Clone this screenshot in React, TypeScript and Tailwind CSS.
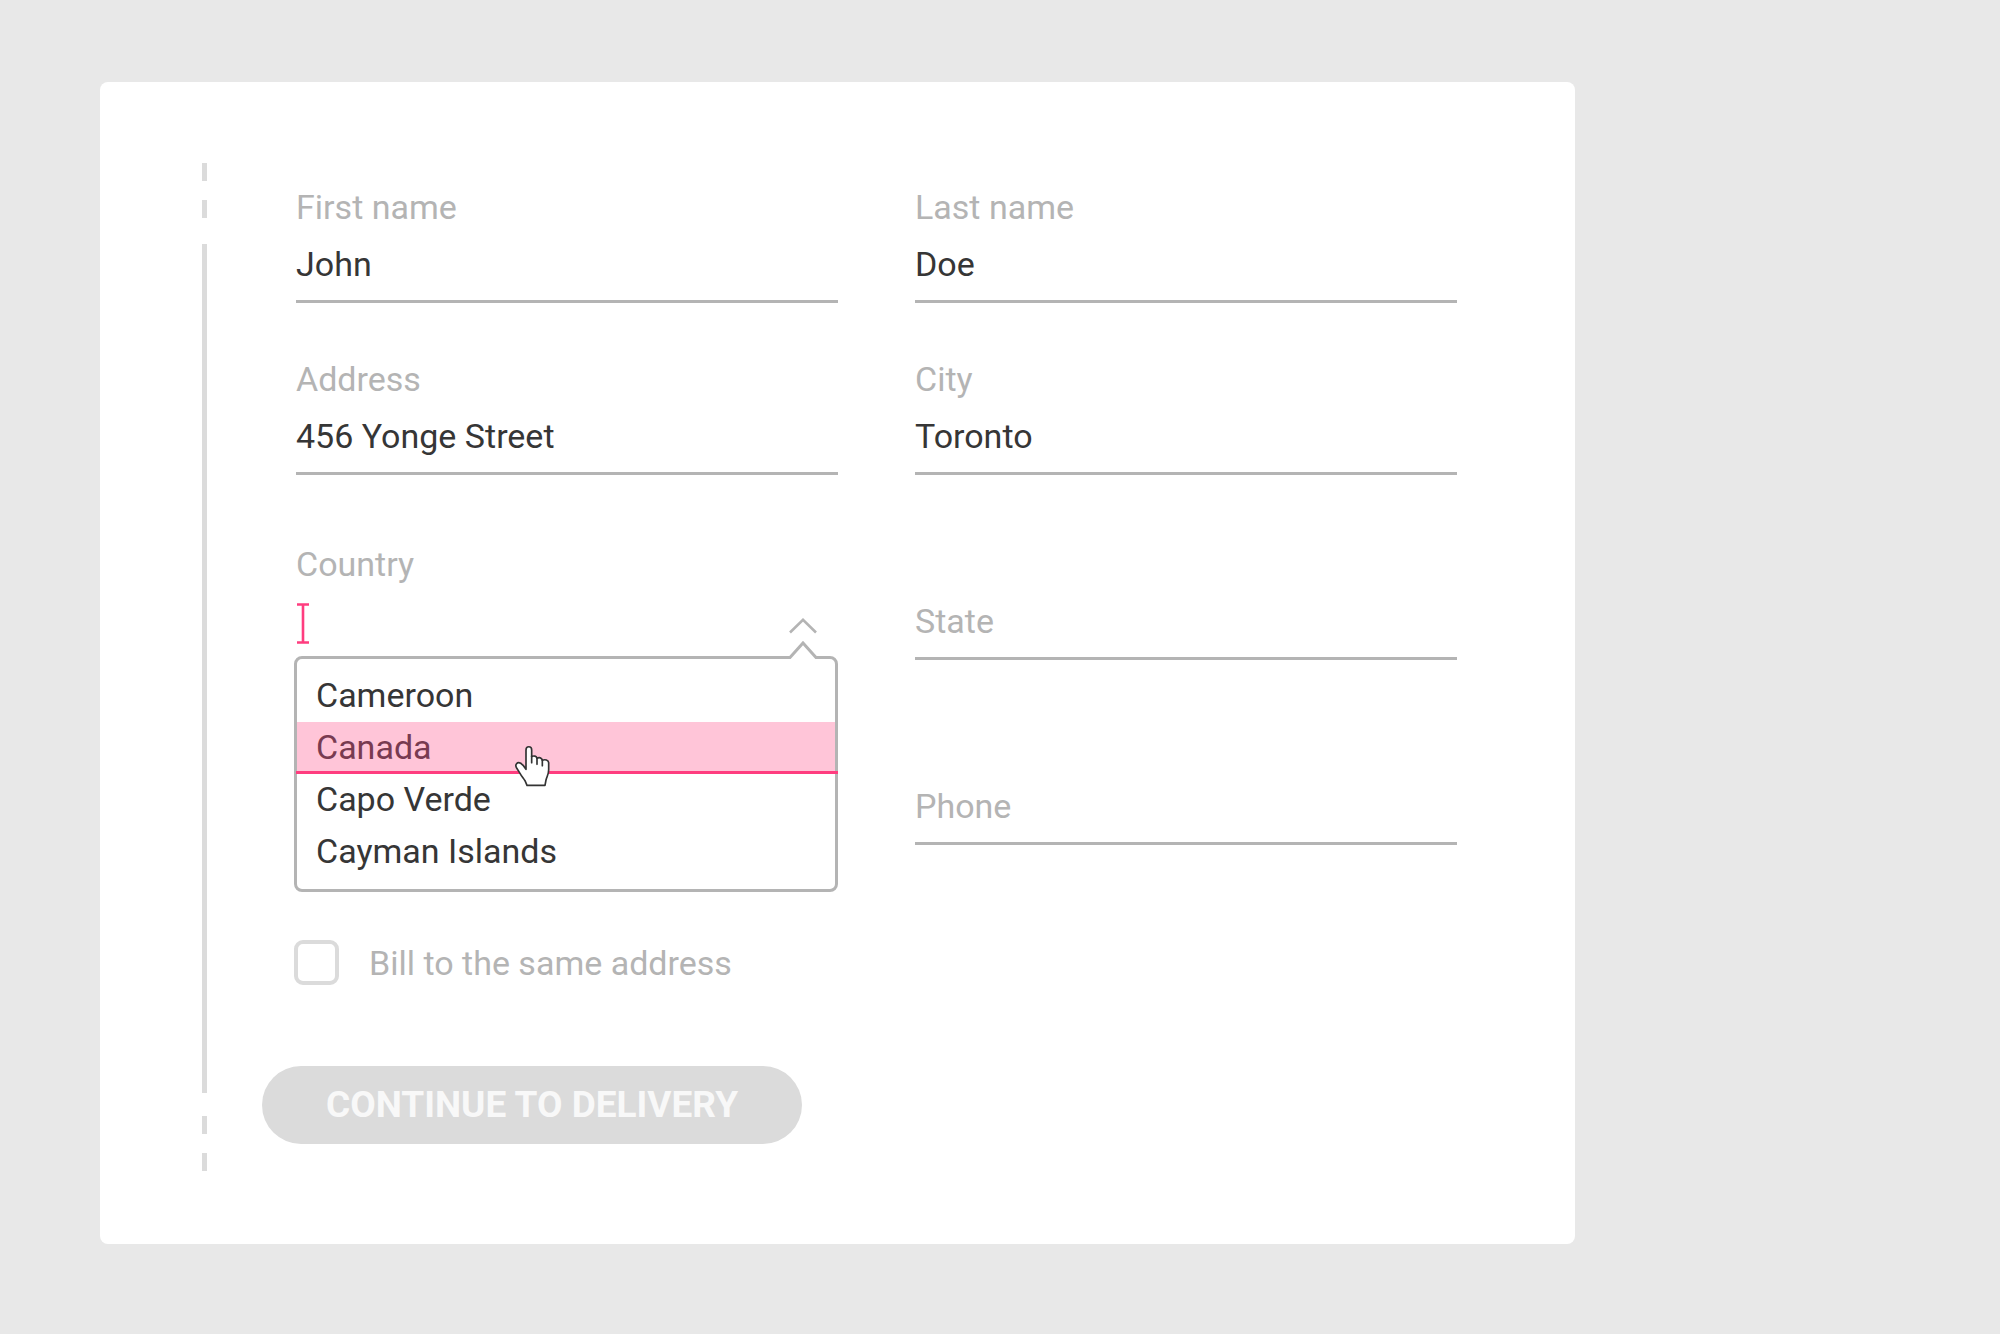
import { useState } from "react";

type FieldProps = {
  id: string;
  label: string;
  initial?: string;
};

function Field({ id, label, initial }: FieldProps) {
  const [value, setValue] = useState(initial ?? "");
  return (
    <div className="flex h-[124px] flex-col justify-end">
      {initial !== undefined && (
        <label htmlFor={id} className="leading-[57px] text-[#b4b4b4]">
          {label}
        </label>
      )}
      <input
        id={id}
        type="text"
        value={value}
        aria-label={label}
        placeholder={initial === undefined ? label : undefined}
        onChange={(e) => setValue(e.target.value)}
        className="h-[67px] w-full shrink-0 border-b-[3px] border-[#b4b4b4] bg-transparent p-0 pb-[9px] outline-none placeholder:text-[#b4b4b4] placeholder:opacity-100"
      />
    </div>
  );
}

function HandCursor() {
  return (
    <svg
      aria-hidden="true"
      viewBox="72 45 108 126"
      className="pointer-events-none absolute top-[23px] left-[217px] h-[42px] w-[36px]"
      fill="#fff"
      stroke="#333"
      strokeWidth="5"
      strokeLinejoin="round"
      strokeLinecap="round"
    >
      <path d="M111 166 L105 152 C99 143 95 139 90 130 L80 114 C73 102 83 95 92 100 C99 104 103 110 108 118 V60 C108 47 125 47 125 60 V80 C131 76 140 78 141 85 C147 81 156 83 157 91 C165 87 175 90 176 98 V119 C176 133 171 139 168 150 L165 166 Z" />
      <path d="M125 78 V98 M141 84 V103 M157 90 V107" fill="none" />
    </svg>
  );
}

const countries = ["Cameroon", "Canada", "Capo Verde", "Cayman Islands"];

function CountryField() {
  const [value, setValue] = useState("");
  return (
    <div className="relative flex h-[124px] flex-col">
      <label htmlFor="country" className="leading-[57px] text-[#b4b4b4]">
        Country
      </label>
      <div className="relative flex h-[57px] items-center justify-between pr-[21px]">
        <svg
          aria-hidden="true"
          viewBox="0 0 12 41"
          className="pointer-events-none absolute top-[10px] left-px h-[41px] w-[12px]"
          stroke="#ff3d7f"
          strokeWidth="2.6"
          fill="none"
        >
          <path d="M0 1.5 H12 M6 1.5 V39.5 M0 39.5 H12" />
        </svg>
        <input
          id="country"
          type="text"
          role="combobox"
          aria-expanded="true"
          aria-controls="country-list"
          value={value}
          onChange={(e) => setValue(e.target.value)}
          className="h-[57px] min-w-0 flex-1 bg-transparent p-0 caret-transparent outline-none"
        />
        <button type="button" aria-label="Close country list" className="mt-[9px]">
          <svg viewBox="0 0 28 16" className="h-[16px] w-[28px]" fill="none" stroke="#b4b4b4" strokeWidth="2.6">
            <path d="M1 14.5 L14 1.8 L27 14.5" />
          </svg>
        </button>
      </div>
      <div className="absolute top-[120px] right-0 -left-[2px] rounded-[8px] border-[3px] border-[#b4b4b4] bg-white py-[11px]">
        <svg
          aria-hidden="true"
          viewBox="0 0 30 20"
          className="absolute -top-[18px] right-[17px] h-[20px] w-[30px]"
        >
          <path d="M2 16 L15 2 L28 16 V20 H2 Z" fill="#fff" />
          <path d="M0 16.5 H2 L15 2 L28 16.5 H30" fill="none" stroke="#b4b4b4" strokeWidth="3" />
        </svg>
        <ul id="country-list" role="listbox" aria-label="Country">
          {countries.map((name) =>
            name === "Canada" ? (
              <li
                key={name}
                role="option"
                aria-selected="true"
                className="relative h-[52px] bg-[#ffc5d8] px-[19px] leading-[50px] text-[#783b51]"
              >
                {name}
                <span className="absolute -right-[3px] bottom-0 -left-px h-[3px] bg-[#ff3d7f]" />
                <HandCursor />
              </li>
            ) : (
              <li key={name} role="option" aria-selected="false" className="h-[52px] px-[19px] leading-[50px]">
                {name}
              </li>
            ),
          )}
        </ul>
      </div>
    </div>
  );
}

function Rail() {
  return (
    <div aria-hidden="true" className="flex w-[5px] flex-col">
      <span className="h-[18px] bg-[#dbdbdb]" />
      <span className="mt-[19px] h-[18px] bg-[#dbdbdb]" />
      <span className="mt-[26px] mb-[23px] flex-1 bg-[#dbdbdb]" />
      <span className="h-[18px] bg-[#dbdbdb]" />
      <span className="mt-[19px] h-[18px] bg-[#dbdbdb]" />
    </div>
  );
}

export default function App() {
  const [sameAddress, setSameAddress] = useState(false);
  return (
    <main className="min-h-screen bg-[#e8e8e8] px-[100px] py-[82px] font-[Roboto,sans-serif] text-[34px] text-[#363636]">
      <section className="flex w-full max-w-[1475px] gap-[55px] rounded-[8px] bg-white pt-[81px] pr-[118px] pb-[73px] pl-[102px]">
        <Rail />
        <form className="min-w-0 flex-1 pt-[16px] pb-[27px]" onSubmit={(e) => e.preventDefault()}>
          <div className="pl-[34px]">
            <div className="grid grid-cols-2 gap-x-[77px] gap-y-[48px]">
              <Field id="first-name" label="First name" initial="John" />
              <Field id="last-name" label="Last name" initial="Doe" />
              <Field id="address" label="Address" initial="456 Yonge Street" />
              <Field id="city" label="City" initial="Toronto" />
            </div>
            <div className="mt-[61px] grid grid-cols-2 gap-x-[77px] gap-y-[61px]">
              <CountryField />
              <Field id="state" label="State" />
              <div className="col-start-2">
                <Field id="phone" label="Phone" />
              </div>
            </div>
            <label className="mt-[95px] -ml-[2px] flex w-fit gap-[30px] leading-[46px] text-[#b4b4b4]">
              <input
                type="checkbox"
                checked={sameAddress}
                onChange={(e) => setSameAddress(e.target.checked)}
                className="size-[45px] appearance-none rounded-[9px] border-4 border-[#dbdbdb] checked:bg-[#dbdbdb]"
              />
              Bill to the same address
            </label>
          </div>
          <button
            type="submit"
            className="mt-[80px] flex h-[78px] w-[540px] items-center justify-center rounded-full bg-[#dbdbdb] text-[37px] leading-[56px] font-bold text-[#f8f8f8]"
          >
            CONTINUE TO DELIVERY
          </button>
        </form>
      </section>
    </main>
  );
}
